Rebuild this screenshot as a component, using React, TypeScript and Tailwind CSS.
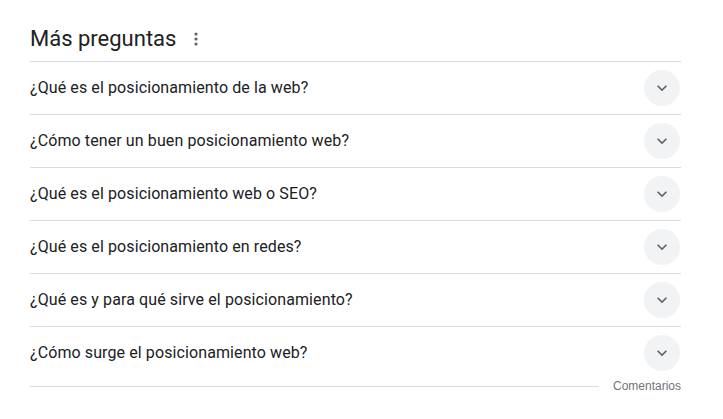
import React from "react";

const questions = [
  "¿Qué es el posicionamiento de la web?",
  "¿Cómo tener un buen posicionamiento web?",
  "¿Qué es el posicionamiento web o SEO?",
  "¿Qué es el posicionamiento en redes?",
  "¿Qué es y para qué sirve el posicionamiento?",
  "¿Cómo surge el posicionamiento web?",
];

function Chevron() {
  return (
    <svg width="20" height="20" viewBox="0 0 24 24" fill="#5f6368">
      <path d="M7.41 8.59L12 13.17l4.59-4.58L18 10l-6 6-6-6 1.41-1.41z" />
    </svg>
  );
}

export default function App() {
  return (
    <div
      className="w-[723px] h-[419px] bg-white pl-[30px] pr-[42px]"
      style={{ fontFamily: "Roboto, 'Liberation Sans', sans-serif" }}
    >
      <div className="h-[61px] flex items-end pb-[8px]">
        <span className="text-[22px] leading-[28px] text-[#202124]">Más preguntas</span>
        <svg className="ml-[17px] mb-[6px]" width="6" height="16" viewBox="0 0 6 16" fill="#5f6368">
          <circle cx="3" cy="3" r="1.6" />
          <circle cx="3" cy="8" r="1.6" />
          <circle cx="3" cy="13" r="1.6" />
        </svg>
      </div>
      {questions.map((q) => (
        <div
          key={q}
          className="h-[53px] border-t border-[#dadce0] flex items-center justify-between"
        >
          <span className="text-[16px] leading-[24px] tracking-[0.1px] text-[#202124]">{q}</span>
          <div className="w-[36px] h-[36px] rounded-full bg-[#f1f3f4] flex items-center justify-center mr-[1px]">
            <Chevron />
          </div>
        </div>
      ))}
      <div className="h-[14px] flex items-center">
        <div className="flex-1 h-px bg-[#dadce0]" />
        <span
          className="ml-[14px] text-[12px] leading-[14px] text-[#70757a]"
          style={{ fontFamily: "'Liberation Sans', Arial, sans-serif" }}
        >
          Comentarios
        </span>
      </div>
    </div>
  );
}
